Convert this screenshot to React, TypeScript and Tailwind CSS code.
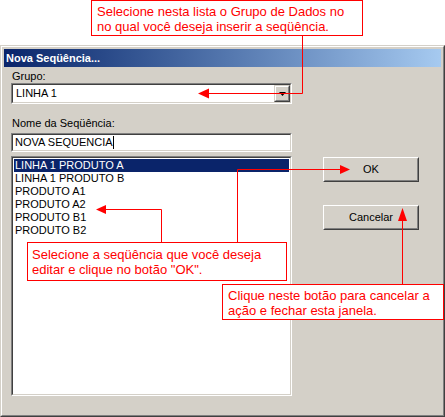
import React from "react"

const items = [
  "LINHA 1 PRODUTO A",
  "LINHA 1 PRODUTO B",
  "PRODUTO A1",
  "PRODUTO A2",
  "PRODUTO B1",
  "PRODUTO B2",
]

// sunken 3D frame used by combo, edit and list
function Sunken({ className, children }: { className?: string; children?: React.ReactNode }) {
  return (
    <div className={`border border-t-[#808080] border-l-[#808080] border-r-white border-b-white ${className ?? ""}`}>
      <div className="h-full border border-t-[#404040] border-l-[#404040] border-r-[#d4d0c8] border-b-[#d4d0c8] bg-white">
        {children}
      </div>
    </div>
  )
}

function Button({ label }: { label: string }) {
  return (
    <div className="w-[96px] h-[25px] border border-t-white border-l-white border-r-[#404040] border-b-[#404040]">
      <div className="h-full flex items-center justify-center border border-t-[#d4d0c8] border-l-[#d4d0c8] border-r-[#808080] border-b-[#808080] text-[11px] text-black">
        {label}
      </div>
    </div>
  )
}

function Callout({ className, lines }: { className: string; lines: string[] }) {
  return (
    <div className={`absolute bg-white border border-[#ff0000] text-[#ff0000] text-[13px] leading-[15px] ${className}`}>
      {lines.map((l) => (
        <div key={l}>{l}</div>
      ))}
    </div>
  )
}

export default function App() {
  return (
    <div className="relative w-[445px] h-[417px] bg-white overflow-hidden font-['Liberation_Sans',Arial,sans-serif]">
      <div className="h-[45px]" />

      <div className="h-[372px] border border-t-[#d4d0c8] border-l-[#d4d0c8] border-r-[#404040] border-b-[#404040]">
        <div className="h-full border border-t-white border-l-white border-r-[#808080] border-b-[#808080] bg-[#d4d0c8] p-[2px]">
          <div className="h-[18px] flex items-center pl-[2px] bg-gradient-to-r from-[#0a246a] to-[#a6caf0] text-white font-bold text-[11px]">
            Nova Seqüência...
          </div>

          <div className="pl-[7px] pt-[1px]">
            <div className="text-[11px] leading-[13px] text-black h-[15px] pt-[2px] pl-[1px]">Grupo:</div>
            <Sunken className="w-[281px] h-[21px]">
              <div className="h-full flex items-center justify-between pl-[3px] pr-0">
                <span className="text-[11px] text-black">LINHA 1</span>
                <div className="w-[16px] h-[17px] border border-t-[#d4d0c8] border-l-[#d4d0c8] border-r-[#404040] border-b-[#404040] bg-[#d4d0c8]">
                  <div className="h-full flex items-center justify-center border border-t-white border-l-white border-r-[#808080] border-b-[#808080]">
                    <svg width="7" height="4" viewBox="0 0 7 4">
                      <polygon points="0,0 7,0 3.5,4" fill="#000" />
                    </svg>
                  </div>
                </div>
              </div>
            </Sunken>

            <div className="text-[11px] leading-[13px] text-black mt-[13px] h-[16px] pl-[1px]">Nome da Seqüência:</div>
            <Sunken className="w-[281px] h-[19px]">
              <div className="h-full flex items-center pl-[2px] text-[11px] text-black">
                NOVA SEQUENCIA<span className="inline-block w-[1px] h-[13px] bg-black" />
              </div>
            </Sunken>

            <div className="flex mt-[4px]">
              <Sunken className="w-[281px] h-[240px]">
                <div className="p-[1px] text-[11px] leading-[13px] text-black">
                  {items.map((it, i) => (
                    <div
                      key={it}
                      className={`h-[13px] pl-[1px] ${i === 0 ? "bg-[#0a246a] text-white" : ""}`}
                    >
                      {it}
                    </div>
                  ))}
                </div>
              </Sunken>

              <div className="flex flex-col gap-[23px] ml-[31px] pt-[1px]">
                <Button label="OK" />
                <Button label="Cancelar" />
              </div>
            </div>
          </div>
        </div>
      </div>

      <Callout
        className="left-[91px] top-0 w-[272px] h-[36px] pl-[5px] pt-[3px]"
        lines={["Selecione nesta lista o Grupo de Dados no", "no qual você deseja inserir a seqüência."]}
      />
      <Callout
        className="left-[27px] top-[242px] w-[260px] h-[39px] pl-[4px] pt-[4px]"
        lines={["Selecione a seqüência que você deseja", 'editar e clique no botão "OK".']}
      />
      <Callout
        className="left-[222px] top-[284px] w-[222px] h-[36px] pl-[5px] pt-[3px]"
        lines={["Clique neste botão para cancelar a", "ação e fechar esta janela."]}
      />

      <svg className="absolute inset-0 pointer-events-none" width="445" height="417">
        <g stroke="#ff0000" strokeWidth="1" fill="none">
          <polyline points="302.5,36 302.5,93.5 208,93.5" />
          <polyline points="161.5,242 161.5,209.5 105,209.5" />
          <polyline points="237.5,242 237.5,169.5 341,169.5" />
          <polyline points="402.5,284 402.5,220" />
        </g>
        <g fill="#ff0000">
          <polygon points="198,93.5 209,88.5 209,98.5" />
          <polygon points="96,209.5 106,205 106,214" />
          <polygon points="350,169.5 340,165 340,174" />
          <polygon points="402.5,208 398,221 407,221" />
        </g>
      </svg>
    </div>
  )
}
